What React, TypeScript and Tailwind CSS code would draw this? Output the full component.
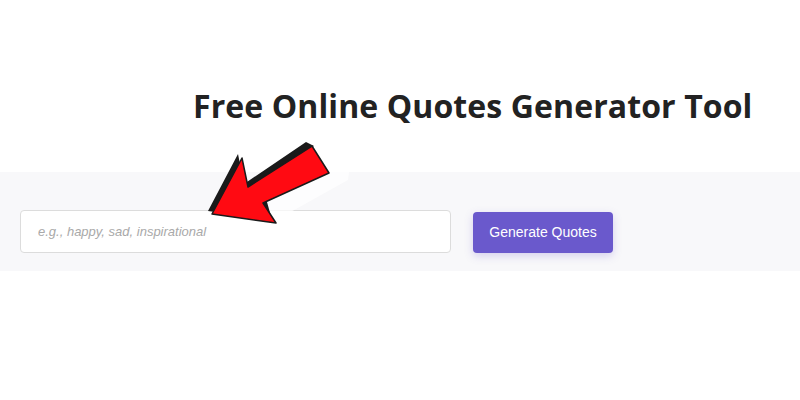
const Arrow = () => (
  <svg
    className="absolute left-0 top-0 pointer-events-none"
    width="800"
    height="400"
    viewBox="0 0 800 400"
  >
    <polygon points="308,138 352,150 348,180 262,228 222,234 210,218" fill="#ffffff" opacity="0.7" />
    <polygon
      points="208,211 238,154 244,184 306,142 314,146 262,184 272,220"
      fill="#1a1a1a"
    />
    <polygon
      points="212,214 242,158 248,187 312,146 329,173 263,203 276,223"
      fill="#ff0a12"
      stroke="#1a1a1a"
      strokeWidth="1.5"
      strokeLinejoin="round"
    />
  </svg>
);

export default function App() {
  return (
    <div className="relative w-[800px] h-[400px] bg-white overflow-hidden">
      <div className="pt-[86px] pl-[193px] h-[172px]">
        <h1 className="text-[32px] leading-[40px] font-bold text-[#222222] font-['Open_Sans',sans-serif] tracking-[0.1px]">
          Free Online Quotes Generator Tool
        </h1>
      </div>
      <div className="bg-[#f8f8fa] h-[99px] pt-[38px] px-[20px] flex items-start gap-[22px]">
        <input
          type="text"
          placeholder="e.g., happy, sad, inspirational"
          className="w-[431px] h-[43px] bg-white border border-[#dcdcdc] rounded-[4px] pl-[17px] text-[13px] italic font-['Liberation_Sans',Arial,sans-serif] placeholder:text-[#a9a9a9] outline-none"
        />
        <button className="mt-[2px] w-[140px] h-[41px] bg-[#6a59cc] text-white rounded-[4px] text-[14px] font-['Liberation_Sans',Arial,sans-serif] shadow-[0_3px_8px_rgba(106,89,204,0.25)]">
          Generate Quotes
        </button>
      </div>
      <Arrow />
    </div>
  );
}
